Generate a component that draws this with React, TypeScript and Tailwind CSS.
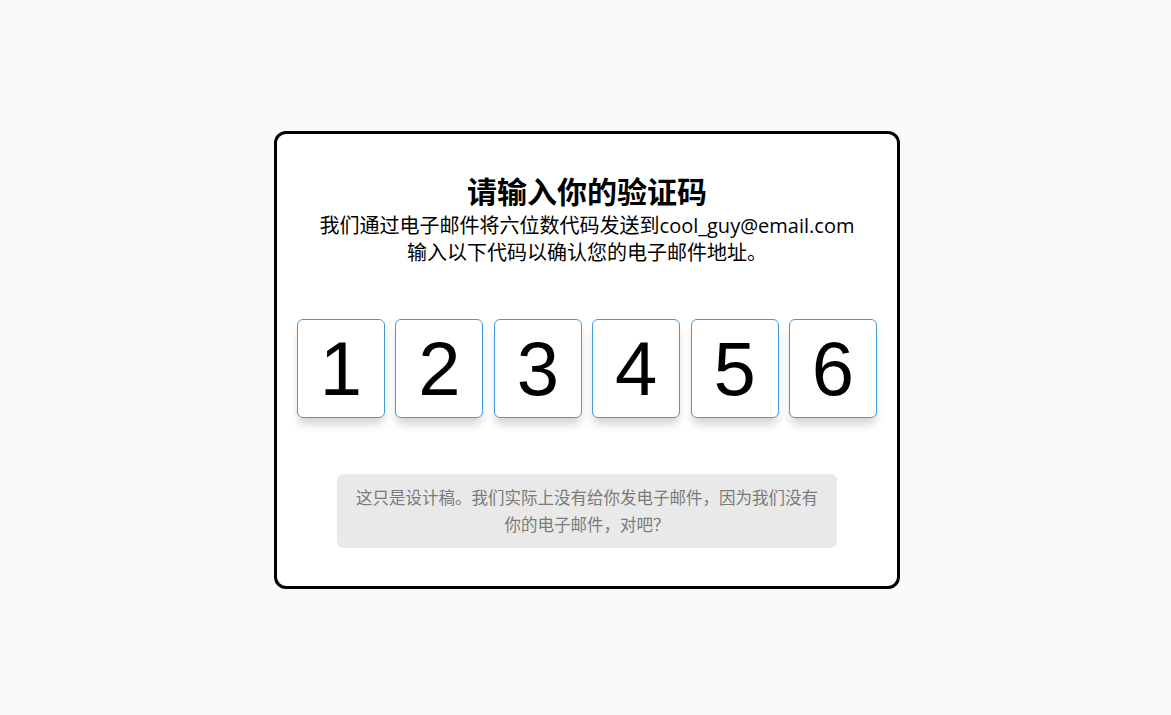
const digits = ["1", "2", "3", "4", "5", "6"];

const App = () => {
  return (
    <main className="min-h-screen w-full bg-[#f9fafc] flex justify-center items-start pt-[131px] pl-[3px] font-['Open_Sans','Noto_Sans_CJK_SC',sans-serif]">
      <section className="w-[626px] h-[458px] bg-white border-[3px] border-black rounded-[12px] px-5 pt-[38px] flex flex-col items-center">
        <h1 className="text-[30px] leading-[40px] font-bold text-black">请输入你的验证码</h1>
        <p className="text-[20px] leading-[27px] text-black text-center">
          我们通过电子邮件将六位数代码发送到cool_guy@email.com
          <br />
          输入以下代码以确认您的电子邮件地址。
        </p>
        <div className="mt-[53px] w-full flex justify-between">
          {digits.map((d) => (
            <input
              key={d}
              type="text"
              defaultValue={d}
              maxLength={1}
              className="w-[88px] h-[99px] rounded-[6px] border border-[#3d9be0] bg-white text-center text-[76px] text-black outline-none font-['Liberation_Sans',sans-serif] shadow-[0_8px_10px_-2px_rgba(0,0,0,0.18)]"
            />
          ))}
        </div>
        <div className="mt-[56px] w-[500px] h-[74px] bg-[#e9e9e9] rounded-[6px] px-4 flex items-center justify-center">
          <p className="text-[16.5px] leading-[27px] text-[#7a7a7a] text-center">
            这只是设计稿。我们实际上没有给你发电子邮件，因为我们没有你的电子邮件，对吧？
          </p>
        </div>
      </section>
    </main>
  );
};

export default App;
